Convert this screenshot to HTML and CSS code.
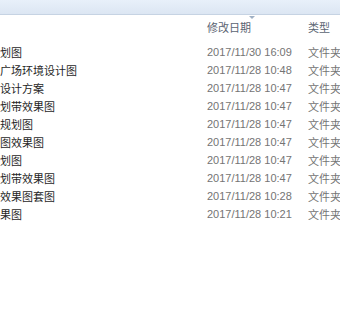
FILE: index.html
```html
<!DOCTYPE html>
<html lang="zh-CN">
<head>
<meta charset="utf-8">
<title>文件列表</title>
<link rel="stylesheet" href="styles.css">
</head>
<body>
<div class="window">
  <div class="toolbar"></div>
  <div class="header">
    <span class="sort"></span>
    <div class="col name"></div>
    <div class="col date">修改日期</div>
    <div class="col type">类型</div>
  </div>
  <div class="list">
    <div class="row"><div class="col name">划图</div><div class="col date">2017/11/30 16:09</div><div class="col type">文件夹</div></div>
    <div class="row"><div class="col name">广场环境设计图</div><div class="col date">2017/11/28 10:48</div><div class="col type">文件夹</div></div>
    <div class="row"><div class="col name">设计方案</div><div class="col date">2017/11/28 10:47</div><div class="col type">文件夹</div></div>
    <div class="row"><div class="col name">划带效果图</div><div class="col date">2017/11/28 10:47</div><div class="col type">文件夹</div></div>
    <div class="row"><div class="col name">规划图</div><div class="col date">2017/11/28 10:47</div><div class="col type">文件夹</div></div>
    <div class="row"><div class="col name">图效果图</div><div class="col date">2017/11/28 10:47</div><div class="col type">文件夹</div></div>
    <div class="row"><div class="col name">划图</div><div class="col date">2017/11/28 10:47</div><div class="col type">文件夹</div></div>
    <div class="row"><div class="col name">划带效果图</div><div class="col date">2017/11/28 10:47</div><div class="col type">文件夹</div></div>
    <div class="row"><div class="col name">效果图套图</div><div class="col date">2017/11/28 10:28</div><div class="col type">文件夹</div></div>
    <div class="row"><div class="col name">果图</div><div class="col date">2017/11/28 10:21</div><div class="col type">文件夹</div></div>
  </div>
</div>
</body>
</html>
```
FILE: styles.css
```css
html, body {
  margin: 0;
  padding: 0;
  background: #ffffff;
}
body {
  font-family: "Liberation Sans", "Noto Sans CJK SC", sans-serif;
  font-size: 11px;
  width: 340px;
  height: 320px;
  overflow: hidden;
}
.window {
  display: flex;
  flex-direction: column;
  width: 340px;
}
.toolbar {
  height: 14px;
  background: linear-gradient(#e8f0fa, #dce6f3);
  border-bottom: 1px solid #c6d3e3;
}
.header {
  position: relative;
  display: flex;
  height: 24px;
  align-items: center;
  color: #5b6472;
}
.sort {
  position: absolute;
  left: 249px;
  top: 1px;
  width: 0;
  height: 0;
  border-left: 3px solid transparent;
  border-right: 3px solid transparent;
  border-top: 3px solid #9fb0c4;
}
.list {
  display: flex;
  flex-direction: column;
  padding-top: 4px;
}
.row {
  display: flex;
  height: 18px;
  align-items: center;
  white-space: nowrap;
}
.col {
  white-space: nowrap;
  overflow: hidden;
}
.name {
  width: 207px;
  color: #1f1f1f;
}
.date {
  width: 101px;
  color: #747474;
  overflow: visible;
}
.type {
  flex: 1;
  color: #747474;
}
.header .date, .header .type {
  color: #5b6472;
}
```
